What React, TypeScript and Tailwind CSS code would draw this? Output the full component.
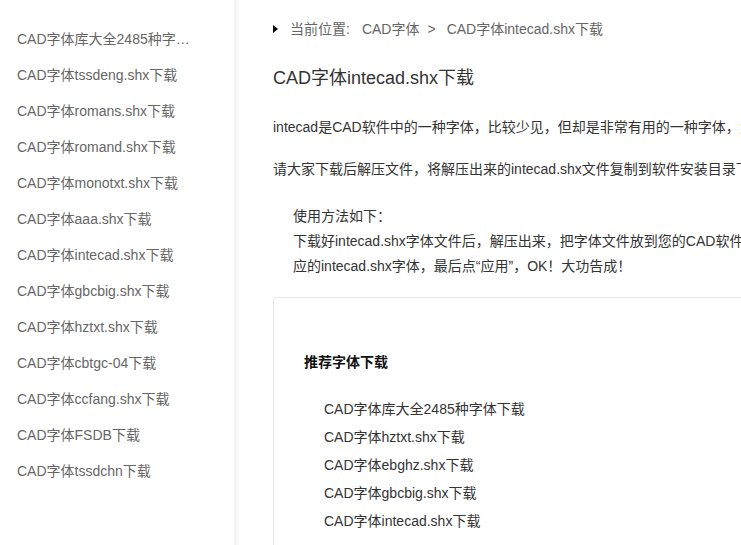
const sideLinks = [
  "CAD字体库大全2485种字体下载",
  "CAD字体tssdeng.shx下载",
  "CAD字体romans.shx下载",
  "CAD字体romand.shx下载",
  "CAD字体monotxt.shx下载",
  "CAD字体aaa.shx下载",
  "CAD字体intecad.shx下载",
  "CAD字体gbcbig.shx下载",
  "CAD字体hztxt.shx下载",
  "CAD字体cbtgc-04下载",
  "CAD字体ccfang.shx下载",
  "CAD字体FSDB下载",
  "CAD字体tssdchn下载",
];

const recommended = [
  "CAD字体库大全2485种字体下载",
  "CAD字体hztxt.shx下载",
  "CAD字体ebghz.shx下载",
  "CAD字体gbcbig.shx下载",
  "CAD字体intecad.shx下载",
];

export default function App() {
  return (
    <div
      className="flex w-screen h-screen overflow-hidden bg-white"
      style={{ fontFamily: '"Liberation Sans", "Noto Sans CJK SC", sans-serif' }}
    >
      {/* Sidebar */}
      <aside className="w-[234px] shrink-0 bg-white pt-[21px] pl-[17px]">
        {sideLinks.map((t) => (
          <div key={t} className="w-[182px] h-9 leading-9 text-[14px] text-[#666] truncate">
            {t}
          </div>
        ))}
      </aside>
      <div className="w-[6px] shrink-0 bg-gradient-to-r from-[#f3f3f3] to-[#fbfbfb]" />

      {/* Main */}
      <main className="flex-1 min-w-0 pl-[33px] flex flex-col whitespace-nowrap text-[14px] text-[#333]">
        <div className="mt-[18px] h-[22px] leading-[22px] flex items-center text-[#666]">
          <span className="w-0 h-0 border-y-[4px] border-y-transparent border-l-[5px] border-l-black mr-[12px]" />
          <span>当前位置:</span>
          <span className="ml-[12px]">CAD字体</span>
          <span className="ml-[8px]">&gt;</span>
          <span className="ml-[11px]">CAD字体intecad.shx下载</span>
        </div>

        <h1 className="mt-[24px] leading-[28px] text-[18px] text-[#333]">CAD字体intecad.shx下载</h1>

        <p className="mt-[23px] leading-[24px]">
          intecad是CAD软件中的一种字体，比较少见，但却是非常有用的一种字体，为了方便大家使用，本站提供免费下载。
        </p>
        <p className="mt-[18px] leading-[24px]">
          请大家下载后解压文件，将解压出来的intecad.shx文件复制到软件安装目录下的Fonts文件夹中即可。
        </p>

        <div className="mt-[23px] pl-[20px] leading-[25px]">
          <div>使用方法如下：</div>
          <div>下载好intecad.shx字体文件后，解压出来，把字体文件放到您的CAD软件安装目录下的Fonts文件夹中，在字体样式中选择对</div>
          <div>应的intecad.shx字体，最后点“应用”，OK！大功告成！</div>
        </div>

        <section className="mt-[18px] w-[700px] border border-[#e6e6e6] rounded-[3px] pt-[50px] pl-[30px] pb-10">
          <h2 className="leading-[28px] font-bold text-[14px] text-[#111]">推荐字体下载</h2>
          <ul className="mt-[19px] pl-[20px]">
            {recommended.map((t) => (
              <li key={t} className="leading-[28px] text-[#333]">
                {t}
              </li>
            ))}
          </ul>
        </section>
      </main>
    </div>
  );
}
